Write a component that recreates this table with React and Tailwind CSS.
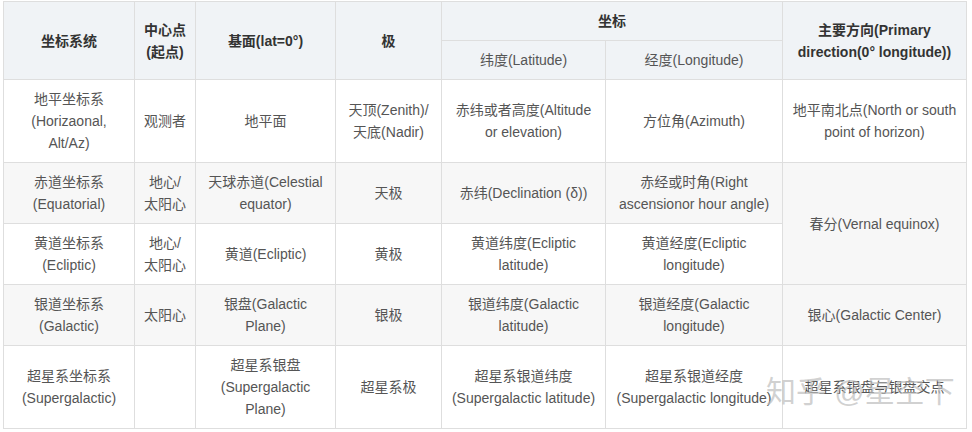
const rows = [
  {
    bg: 'bg-white',
    cells: [
      ['地平坐标系', '(Horizaonal,', 'Alt/Az)'],
      ['观测者'],
      ['地平面'],
      ['天顶(Zenith)/', '天底(Nadir)'],
      ['赤纬或者高度(Altitude', 'or elevation)'],
      ['方位角(Azimuth)'],
      ['地平南北点(North or south', 'point of horizon)'],
    ],
  },
  {
    bg: 'bg-[#f7f7f7]',
    cells: [
      ['赤道坐标系', '(Equatorial)'],
      ['地心/', '太阳心'],
      ['天球赤道(Celestial', 'equator)'],
      ['天极'],
      ['赤纬(Declination (δ))'],
      ['赤经或时角(Right', 'ascensionor hour angle)'],
    ],
    span: ['春分(Vernal equinox)'],
  },
  {
    bg: 'bg-white',
    cells: [
      ['黄道坐标系', '(Ecliptic)'],
      ['地心/', '太阳心'],
      ['黄道(Ecliptic)'],
      ['黄极'],
      ['黄道纬度(Ecliptic', 'latitude)'],
      ['黄道经度(Ecliptic', 'longitude)'],
    ],
  },
  {
    bg: 'bg-[#f7f7f7]',
    cells: [
      ['银道坐标系', '(Galactic)'],
      ['太阳心'],
      ['银盘(Galactic', 'Plane)'],
      ['银极'],
      ['银道纬度(Galactic', 'latitude)'],
      ['银道经度(Galactic', 'longitude)'],
      ['银心(Galactic Center)'],
    ],
  },
  {
    bg: 'bg-white',
    cells: [
      ['超星系坐标系', '(Supergalactic)'],
      [],
      ['超星系银盘', '(Supergalactic', 'Plane)'],
      ['超星系极'],
      ['超星系银道纬度', '(Supergalactic latitude)'],
      ['超星系银道经度', '(Supergalactic longitude)'],
      ['超星系银盘与银盘交点'],
    ],
  },
];

// 多行文本
const Lines = ({ lines }) =>
  lines.map((l, i) => (
    <span key={i} className="block whitespace-nowrap">
      {l}
    </span>
  ));

const td = 'border border-[#dedede] px-2 py-2 text-center align-middle';
const th = 'border border-[#dedede] px-2 py-2 text-center align-middle font-bold text-[#333]';

export default function App() {
  return (
    <div
      className="relative w-[972px] h-[432px] bg-white overflow-hidden"
      style={{ fontFamily: '"Liberation Sans", "Noto Sans CJK SC", sans-serif' }}
    >
      <table className="ml-[3px] mt-px w-[963px] table-fixed border-collapse text-[14px] leading-[22px] text-[#555]">
        <colgroup>
          <col className="w-[131px]" />
          <col className="w-[61px]" />
          <col className="w-[140px]" />
          <col className="w-[106px]" />
          <col className="w-[164px]" />
          <col className="w-[177px]" />
          <col className="w-[184px]" />
        </colgroup>
        <thead className="bg-[#f0f3f6]">
          <tr>
            <th rowSpan={2} className={th}>坐标系统</th>
            <th rowSpan={2} className={th}>
              <Lines lines={['中心点', '(起点)']} />
            </th>
            <th rowSpan={2} className={th}>基面(lat=0°)</th>
            <th rowSpan={2} className={th}>极</th>
            <th colSpan={2} className={th}>坐标</th>
            <th rowSpan={2} className={th}>
              <Lines lines={['主要方向(Primary', 'direction(0° longitude))']} />
            </th>
          </tr>
          <tr>
            <td className={td}>纬度(Latitude)</td>
            <td className={td}>经度(Longitude)</td>
          </tr>
        </thead>
        <tbody>
          {rows.map((row, ri) => (
            <tr key={ri} className={row.bg}>
              {row.cells.map((c, ci) => (
                <td key={ci} className={td}>
                  <Lines lines={c} />
                </td>
              ))}
              {row.span && (
                <td rowSpan={2} className={td}>
                  <Lines lines={row.span} />
                </td>
              )}
            </tr>
          ))}
        </tbody>
      </table>

      {/* 水印 */}
      <div className="absolute left-[766px] top-[374px] text-[30px] leading-[36px] whitespace-nowrap text-[#bdbdbd]/70 pointer-events-none">
        知乎 @星空下
      </div>
    </div>
  );
}
